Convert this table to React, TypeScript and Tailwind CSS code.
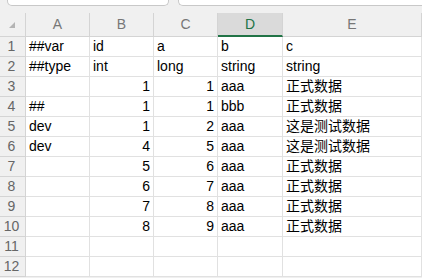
const columns = ['A', 'B', 'C', 'D', 'E'];

type Cell = { v: string; num?: boolean };

const t = (v: string): Cell => ({ v });
const n = (v: string): Cell => ({ v, num: true });

const rows: Cell[][] = [
  [t('##var'), t('id'), t('a'), t('b'), t('c')],
  [t('##type'), t('int'), t('long'), t('string'), t('string')],
  [t(''), n('1'), n('1'), t('aaa'), t('正式数据')],
  [t('##'), n('1'), n('1'), t('bbb'), t('正式数据')],
  [t('dev'), n('1'), n('2'), t('aaa'), t('这是测试数据')],
  [t('dev'), n('4'), n('5'), t('aaa'), t('这是测试数据')],
  [t(''), n('5'), n('6'), t('aaa'), t('正式数据')],
  [t(''), n('6'), n('7'), t('aaa'), t('正式数据')],
  [t(''), n('7'), n('8'), t('aaa'), t('正式数据')],
  [t(''), n('8'), n('9'), t('aaa'), t('正式数据')],
  [t(''), t(''), t(''), t(''), t('')],
  [t(''), t(''), t(''), t(''), t('')],
];

const gridCols = 'grid grid-cols-[26px_64px_64px_64px_65px_1fr]';

function ColumnHeader({ label }: { label: string }) {
  const selected = label === 'D';
  return (
    <div
      className={
        selected
          ? 'flex h-[24px] items-center justify-center border-r border-[#d4d4d4] border-b-2 border-b-[#217346] bg-[#dadada] text-[#217346]'
          : 'flex h-[24px] items-center justify-center border-r border-b border-[#d4d4d4] text-[#777]'
      }
    >
      {label}
    </div>
  );
}

export default function App() {
  return (
    <div
      className="h-[278px] w-[422px] overflow-hidden bg-[#f0f0f0] text-[14px]"
      style={{ fontFamily: '"Liberation Sans", "Noto Sans CJK SC", sans-serif' }}
    >
      {/* formula bar remnants */}
      <div className="flex h-[13px] items-start gap-[9px] pl-[7px]">
        <div className="h-[6px] w-[162px] rounded-b-[5px] border-x border-b border-[#c8c8c8] bg-white" />
        <div className="h-[6px] flex-1 rounded-bl-[5px] border-l border-b border-[#c8c8c8] bg-white" />
      </div>

      <div className={gridCols}>
        <div className="relative h-[24px] border-r border-b border-[#d4d4d4]">
          <svg className="absolute left-[9px] top-[9px]" width="6" height="6" viewBox="0 0 6 6">
            <polygon points="6,0 6,6 0,6" fill="#b4b4b4" />
          </svg>
        </div>
        {columns.map((c) => (
          <ColumnHeader key={c} label={c} />
        ))}
      </div>

      {rows.map((row, i) => (
        <div key={i} className={gridCols}>
          <div className="flex h-[20px] items-center justify-center border-r border-b border-[#d4d4d4] pr-[2px] text-[#666]">
            {i + 1}
          </div>
          {row.map((cell, j) => (
            <div
              key={j}
              className={
                'flex h-[20px] items-center overflow-hidden whitespace-nowrap border-r border-b border-[#e1e1e1] bg-white px-[3px] text-black ' +
                (cell.num ? 'justify-end' : 'justify-start')
              }
            >
              {cell.v}
            </div>
          ))}
        </div>
      ))}
    </div>
  );
}
